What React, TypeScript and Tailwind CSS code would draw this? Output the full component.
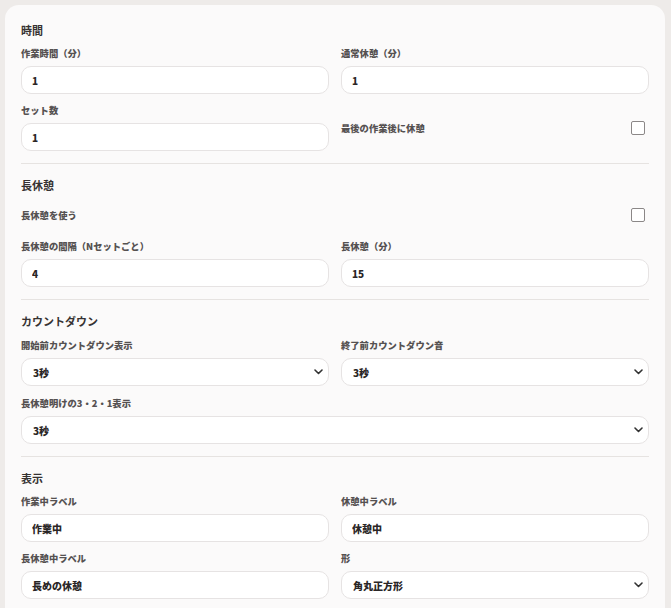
import React from 'react';

const font = { fontFamily: '"Noto Sans CJK JP", "Noto Sans", sans-serif' };

const Label = ({ children }: { children: React.ReactNode }) => (
  <div className="text-[9.3px] leading-[12px] font-black text-[#555151]">{children}</div>
);

const TextField = ({ label, value }: { label: string; value: string }) => (
  <div className="flex flex-col gap-[7px]">
    <Label>{label}</Label>
    <input
      readOnly
      value={value}
      className="h-[28px] w-full rounded-[10px] border border-[#e6e3e3] bg-white pl-[10px] pr-3 text-[10px] font-black text-[#2a2626] outline-none"
    />
  </div>
);

const SelectField = ({ label, value }: { label: string; value: string }) => (
  <div className="flex flex-col gap-[7px]">
    <Label>{label}</Label>
    <div className="relative h-[28px]">
      <select
        value={value}
        onChange={() => {}}
        className="block h-[28px] w-full appearance-none rounded-[10px] border border-[#e6e3e3] bg-white pl-[11px] pr-3 text-[10px] font-black text-[#2a2626] outline-none"
      >
        <option value={value}>{value}</option>
      </select>
      <svg
        className="pointer-events-none absolute right-[6px] top-[11px]"
        width="9"
        height="6"
        viewBox="0 0 9 6"
        fill="none"
      >
        <path d="M1 1l3.5 3.5L8 1" stroke="#333" strokeWidth="1.6" strokeLinecap="round" strokeLinejoin="round" />
      </svg>
    </div>
  </div>
);

const Checkbox = () => (
  <input
    type="checkbox"
    readOnly
    className="h-[14px] w-[14px] appearance-none rounded-[2px] border border-[#8b8787] bg-white"
  />
);

const Section = ({
  title,
  children,
  last = false,
}: {
  title: string;
  children: React.ReactNode;
  last?: boolean;
}) => (
  <section className={`pt-[13px] pb-[12px] ${last ? '' : 'border-b border-[#e6e3e1]'}`}>
    <h2 className="text-[11px] leading-[16px] font-bold text-[#363232]">{title}</h2>
    {children}
  </section>
);

export default function App() {
  return (
    <div className="min-h-[608px] bg-[#eeebe9] px-[5px] pt-[5px]" style={font}>
      <div className="w-[660px] rounded-t-[14px] bg-[#fbfafa] px-4 pt-[4px]">
        <Section title="時間">
          <div className="mt-[9px] grid grid-cols-2 gap-x-3 gap-y-[10px]">
            <TextField label="作業時間（分）" value="1" />
            <TextField label="通常休憩（分）" value="1" />
            <TextField label="セット数" value="1" />
            <div className="flex items-center justify-between pr-[4px]">
              <Label>最後の作業後に休憩</Label>
              <Checkbox />
            </div>
          </div>
        </Section>

        <Section title="長休憩">
          <div className="mt-[15px] flex h-[14px] items-center justify-between pr-[4px]">
            <Label>長休憩を使う</Label>
            <Checkbox />
          </div>
          <div className="mt-[18px] grid grid-cols-2 gap-x-3">
            <TextField label="長休憩の間隔（Nセットごと）" value="4" />
            <TextField label="長休憩（分）" value="15" />
          </div>
        </Section>

        <Section title="カウントダウン">
          <div className="mt-[10px] grid grid-cols-2 gap-x-3 gap-y-[11px]">
            <SelectField label="開始前カウントダウン表示" value="3秒" />
            <SelectField label="終了前カウントダウン音" value="3秒" />
            <div className="col-span-2">
              <SelectField label="長休憩明けの3・2・1表示" value="3秒" />
            </div>
          </div>
        </Section>

        <Section title="表示" last>
          <div className="mt-[9px] grid grid-cols-2 gap-x-3 gap-y-[10px]">
            <TextField label="作業中ラベル" value="作業中" />
            <TextField label="休憩中ラベル" value="休憩中" />
            <TextField label="長休憩中ラベル" value="長めの休憩" />
            <SelectField label="形" value="角丸正方形" />
          </div>
        </Section>
      </div>
    </div>
  );
}
